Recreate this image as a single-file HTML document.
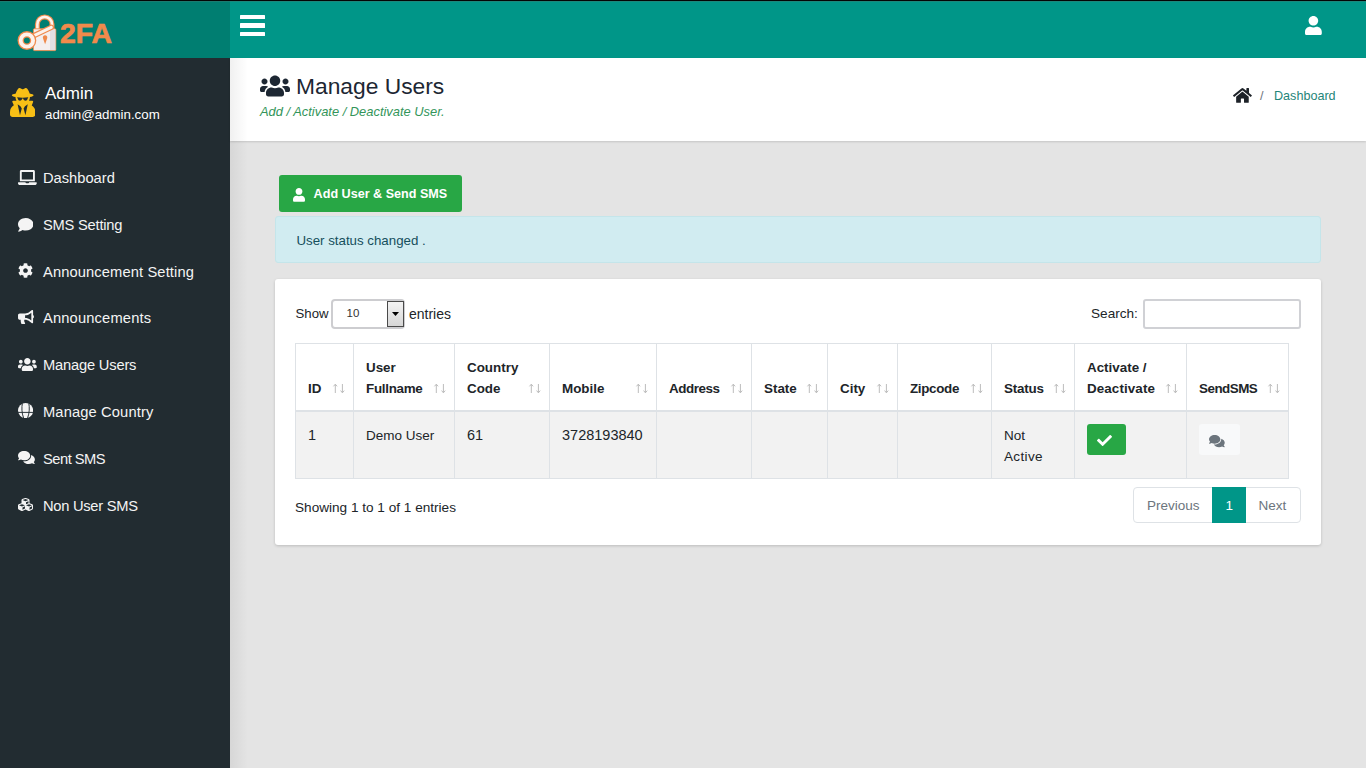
<!DOCTYPE html>
<html><head><meta charset="utf-8"><title>Manage Users</title>
<style>
*{box-sizing:border-box;margin:0;padding:0}
html,body{width:1366px;height:768px;overflow:hidden}
body{font-family:"Liberation Sans",sans-serif;background:#e4e4e4;position:relative;color:#212529}
.a{position:absolute;white-space:nowrap;line-height:1}
.topline{position:absolute;left:0;top:0;width:1366px;height:1px;background:#050505}
.logo{position:absolute;left:0;top:1px;width:230px;height:57px;background:#007e71}
.nav{position:absolute;left:230px;top:1px;width:1136px;height:57px;background:#009688}
.sidebar{position:absolute;left:0;top:58px;width:230px;height:710px;background:#222c31}
.header{position:absolute;left:230px;top:58px;width:1136px;height:83px;background:#fff;box-shadow:0 1px 2px rgba(0,0,0,.14)}
.shadowL{position:absolute;left:230px;top:58px;width:18px;height:710px;background:linear-gradient(to right,rgba(0,0,0,.06),rgba(0,0,0,0))}
.bar{position:absolute;left:240px;width:25px;height:4.5px;background:#fff;border-radius:0.5px}
.side-item{position:absolute;left:43px;font-size:14.7px;color:#f4f4f4}
.side-ico{position:absolute;left:18px}
.btn-add{position:absolute;left:279px;top:175px;width:183px;height:37px;background:#28a745;border-radius:3px}
.alert{position:absolute;left:275px;top:216px;width:1046px;height:47px;background:#d1ecf1;border:1px solid #c4e5ea;border-radius:3px}
.card{position:absolute;left:275px;top:279px;width:1046px;height:266px;background:#fff;border-radius:3px;box-shadow:0 1px 3px rgba(0,0,0,.18)}
.ic{position:absolute;display:block}
.th{font-size:13.4px;font-weight:bold;color:#212529}
.td{font-size:13.5px;color:#212529}
.sort{position:absolute;display:block}
</style></head><body>
<div class="topline"></div>
<div class="logo"></div>
<div class="nav"></div>
<div class="sidebar"></div>
<div class="header"></div>
<div class="shadowL"></div>
<div style="position:absolute;left:0;top:1px;width:1366px;height:1px;background:rgba(60,120,110,.45)"></div>

<!-- hamburger -->
<div class="bar" style="top:14.7px"></div>
<div class="bar" style="top:23.1px"></div>
<div class="bar" style="top:31.7px"></div>

<!-- logo text -->
<div class="a" style="left:60px;top:19px;font-size:28.3px;font-weight:bold;color:#f28a4b;-webkit-text-stroke:0.7px #f28a4b">2FA</div>

<!-- sidebar user -->
<div class="a" style="left:45px;top:84.6px;font-size:17px;color:#fff">Admin</div>
<div class="a" style="left:45px;top:107.7px;font-size:13.3px;color:#fff">admin@admin.com</div>

<!-- sidebar menu -->
<div class="a side-item" style="top:171px">Dashboard</div>
<div class="a side-item" style="top:217.8px;letter-spacing:-0.22px">SMS Setting</div>
<div class="a side-item" style="top:264.6px;letter-spacing:0.12px">Announcement Setting</div>
<div class="a side-item" style="top:311.4px;letter-spacing:0.16px">Announcements</div>
<div class="a side-item" style="top:358.2px;letter-spacing:-0.19px">Manage Users</div>
<div class="a side-item" style="top:405px;letter-spacing:0.13px">Manage Country</div>
<div class="a side-item" style="top:451.8px;letter-spacing:-0.5px">Sent SMS</div>
<div class="a side-item" style="top:498.6px;letter-spacing:-0.27px">Non User SMS</div>

<!-- header -->
<div class="a" style="left:296px;top:75.2px;font-size:22.8px;color:#1d2733">Manage Users</div>
<div class="a" style="left:260px;top:105.8px;font-size:12.9px;font-style:italic;color:#33955a">Add / Activate / Deactivate User.</div>
<div class="a" style="left:1260px;top:90.3px;font-size:12.6px;color:#6c757d">/</div>
<div class="a" style="left:1274px;top:90.3px;font-size:12.6px;color:#1f8579">Dashboard</div>

<!-- add button -->
<div class="btn-add"></div>
<div class="a" style="left:313.6px;top:187.8px;font-size:12.6px;font-weight:bold;color:#fff">Add User &amp; Send SMS</div>

<!-- alert -->
<div class="alert"></div>
<div class="a" style="left:296.4px;top:234.2px;font-size:13.3px;color:#154f5c">User status changed .</div>

<!-- card -->
<div class="card"></div>
<div class="a" style="left:295.5px;top:306.5px;font-size:13.2px">Show</div>
<div class="a" style="left:409px;top:306.5px;font-size:14px">entries</div>
<div class="a" style="left:1091px;top:306.5px;font-size:13.6px">Search:</div>
<div class="a" style="left:295px;top:501.3px;font-size:13.6px">Showing 1 to 1 of 1 entries</div>

<!-- logo icon -->
<svg class="ic" style="left:14px;top:10px" width="50" height="46" viewBox="0 0 50 46">
 <path d="M23.4 20V14.2A7.3 7.3 0 0 1 38 14.2V20" fill="none" stroke="#ef8a4c" stroke-width="5"/>
 <path d="M23.4 20V14.2A7.3 7.3 0 0 1 38 14.2V20" fill="none" stroke="#fdf3ec" stroke-width="2.6"/>
 <rect x="19.4" y="18.8" width="22.4" height="21.8" rx="1" fill="#f4efee" stroke="#ef8a4c" stroke-width="0.9"/>
 <rect x="36" y="19.3" width="5.4" height="20.8" fill="#e3dfe3"/>
 <path d="M31.1 25.3c1.7 0 2.6 1.4 2.1 2.9l-1.2 3.6 -0.9 2.4 -0.9-2.4 -1.2-3.6c-0.5-1.5 0.4-2.9 2.1-2.9z" fill="#ef8a4c"/>
 <path d="M18.5 26.3L37.3 17.4" stroke="#ef8a4c" stroke-width="5.4" stroke-linecap="round"/>
 <path d="M18.5 26.3L37.3 17.4" stroke="#fdf3ec" stroke-width="3" stroke-linecap="round"/>
 <circle cx="12.9" cy="30.5" r="6.2" fill="none" stroke="#ef8a4c" stroke-width="6.4"/>
 <circle cx="12.9" cy="30.5" r="6.2" fill="none" stroke="#fdf3ec" stroke-width="3.8"/>
</svg>

<!-- spy icon -->
<svg class="ic" style="left:9.5px;top:88px" width="25.4" height="29" viewBox="0 0 448 512"><path fill="#f7bf16" d="M383.9 308.3l23.9-62.6c4-10.5-3.7-21.7-15-21.7h-58.5c11-18.9 17.8-40.6 17.8-64v-.3c39.2-7.8 64-19.1 64-31.7 0-13.3-27.3-25.1-70.1-33-9.2-32.8-27-65.8-40.6-82.8-9.5-11.9-25.9-15.6-39.5-8.8l-27.6 13.8c-9 4.5-19.6 4.5-28.6 0L182.1 3.4c-13.6-6.8-30-3.1-39.5 8.8-13.5 17-31.4 50-40.6 82.8-42.7 7.9-70 19.7-70 33 0 12.6 24.8 23.9 64 31.7v.3c0 23.4 6.8 45.1 17.8 64H56.3c-11.5 0-19.2 11.700-14.7 22.300l25.8 60.2C27.3 329.8 0 372.7 0 422.4v44.8C0 491.9 20.1 512 44.8 512h358.4c24.7 0 44.8-20.1 44.8-44.8v-44.8c0-48.4-25.8-90.4-64.1-114.100zM176 480l-41.6-192 49.6 32 24 40-32 120zm96 0l-32-120 24-40 49.6-32L272 480zm41.7-298.5c-3.9 11.9-7 24.6-16.5 33.4-10.1 9.3-48 22.4-64-25-2.8-8.4-15.4-8.4-18.3 0-17 50.2-56 32.4-64 25-9.5-8.8-12.7-21.5-16.5-33.4-.8-2.5-6.300-5.700-6.300-5.800v-10.8c28.3 3.6 61 5.8 96 5.8s67.7-2.1 96-5.8v10.8c-.1.1-5.6 3.2-6.4 5.8z"/></svg>

<!-- sidebar icons -->
<svg class="ic" style="left:18px;top:170px" width="18.75" height="15" viewBox="0 0 640 512"><path fill="#f4f4f4" d="M624 416H381.54c-.74 19.81-14.71 32-32.74 32H288c-18.690 0-33.020-17.470-32.770-32H16c-8.8 0-16 7.2-16 16v16c0 35.2 28.8 64 64 64h512c35.2 0 64-28.8 64-64v-16c0-8.8-7.2-16-16-16zM576 48c0-26.4-21.6-48-48-48H112C85.6 0 64 21.6 64 48v336h512V48zm-64 272H128V64h384v256z"/></svg>
<svg class="ic" style="left:17.5px;top:217px" width="15.5" height="15.5" viewBox="0 0 512 512"><path fill="#f4f4f4" d="M256 32C114.6 32 0 125.1 0 240c0 49.6 21.4 95 57 130.7C44.5 421.1 2.7 466 2.2 466.5c-2.2 2.3-2.8 5.7-1.5 8.7S4.8 480 8 480c66.3 0 116-31.8 140.6-51.4 32.7 12.3 69 19.4 107.4 19.4 141.4 0 256-93.1 256-208S397.4 32 256 32z"/></svg>
<svg class="ic" style="left:18px;top:263px" width="15" height="15" viewBox="0 0 512 512"><path fill="#f4f4f4" d="M487.4 315.7l-42.6-24.6c4.3-23.2 4.3-47 0-70.2l42.6-24.6c4.9-2.8 7.1-8.6 5.5-14-11.1-35.6-30-67.8-54.7-94.6-3.8-4.1-10-5.1-14.8-2.3L380.8 110c-17.9-15.4-38.5-27.3-60.8-35.1V25.8c0-5.6-3.9-10.5-9.4-11.7-36.7-8.2-74.3-7.8-109.2 0-5.5 1.2-9.4 6.1-9.4 11.7V75c-22.2 7.9-42.8 19.8-60.8 35.1L88.7 85.5c-4.9-2.8-11-1.9-14.8 2.3-24.7 26.7-43.6 58.9-54.7 94.6-1.7 5.4.6 11.2 5.5 14L67.3 221c-4.3 23.2-4.3 47 0 70.2l-42.6 24.6c-4.9 2.8-7.1 8.6-5.5 14 11.1 35.6 30 67.8 54.7 94.6 3.8 4.1 10 5.1 14.8 2.3l42.6-24.6c17.9 15.4 38.5 27.3 60.8 35.1v49.2c0 5.6 3.9 10.5 9.4 11.7 36.7 8.2 74.3 7.8 109.2 0 5.5-1.2 9.4-6.1 9.4-11.7v-49.2c22.2-7.9 42.8-19.8 60.8-35.1l42.6 24.6c4.9 2.8 11 1.9 14.8-2.3 24.7-26.7 43.6-58.9 54.7-94.6 1.5-5.5-.7-11.3-5.6-14.1zM256 336c-44.1 0-80-35.9-80-80s35.9-80 80-80 80 35.9 80 80-35.9 80-80 80z"/></svg>
<svg class="ic" style="left:18px;top:309.5px" width="16" height="14.2" viewBox="0 0 576 512"><path fill="#f4f4f4" d="M576 240c0-23.63-12.95-44.04-32-55.12V32.01C544 23.26 537.02 0 512 0c-7.12 0-14.19 2.38-19.98 7.02l-85.03 68.03C364.28 109.19 310.66 128 256 128H64c-35.35 0-64 28.65-64 64v96c0 35.35 28.65 64 64 64h33.7c-1.39 10.48-2.18 21.14-2.18 32 0 39.77 9.26 77.35 25.56 110.94 5.19 10.69 16.52 17.06 28.4 17.06h74.28c26.05 0 41.69-29.84 25.9-50.56-16.4-21.52-26.15-48.36-26.15-77.44 0-11.11 1.62-21.79 4.41-32H256c54.66 0 108.28 18.81 150.98 52.95l85.03 68.03a32.023 32.023 0 0 0 19.98 7.02c24.92 0 32-22.78 32-32V295.13C563.05 284.04 576 263.63 576 240zm-96 141.42l-33.05-26.44C392.95 311.78 325.12 288 256 288v-96c69.12 0 136.95-23.78 190.95-66.98L480 98.58v282.84z"/></svg>
<svg class="ic" style="left:18px;top:357px" width="18.75" height="15" viewBox="0 0 640 512"><path fill="#f4f4f4" d="M96 224c35.3 0 64-28.7 64-64s-28.7-64-64-64-64 28.7-64 64 28.7 64 64 64zm448 0c35.3 0 64-28.7 64-64s-28.7-64-64-64-64 28.7-64 64 28.7 64 64 64zm32 32h-64c-17.6 0-33.5 7.1-45.1 18.6 40.3 22.1 68.9 62 75.1 109.4h66c17.7 0 32-14.3 32-32v-32c0-35.3-28.7-64-64-64zm-256 0c61.9 0 112-50.1 112-112S381.9 32 320 32 208 82.1 208 144s50.1 112 112 112zm76.8 32h-8.3c-20.8 10-43.9 16-68.5 16s-47.6-6-68.5-16h-8.3C179.6 288 128 339.6 128 403.2V432c0 26.5 21.5 48 48 48h288c26.5 0 48-21.5 48-48v-28.8c0-63.6-51.6-115.2-115.2-115.2zm-223.7-13.4C161.5 263.1 145.6 256 128 256H64c-35.3 0-64 28.7-64 64v32c0 17.7 14.3 32 32 32h65.9c6.3-47.4 34.9-87.3 75.2-109.4z"/></svg>
<svg class="ic" style="left:17.8px;top:403px" width="15.2" height="15.2" viewBox="0 0 15.2 15.2"><circle cx="7.6" cy="7.6" r="7.6" fill="#f4f4f4"/><path d="M0 9.4H15.2M4.4 0.3C3.6 4 3.6 10 5.6 15M10.8 0.3C11.6 4 11.6 10 9.6 15" fill="none" stroke="#222c31" stroke-width="0.95"/></svg>
<svg class="ic" style="left:18px;top:450px" width="16.9" height="15" viewBox="0 0 576 512"><path fill="#f4f4f4" d="M416 192c0-88.4-93.1-160-208-160S0 103.6 0 192c0 34.3 14.1 65.9 38 92-13.4 30.2-35.5 54.2-35.8 54.5-2.2 2.3-2.8 5.7-1.5 8.7S4.8 352 8 352c36.6 0 66.9-12.3 88.7-25 32.2 15.7 70.3 25 111.3 25 114.9 0 208-71.6 208-160zm122 220c23.9-26 38-57.7 38-92 0-66.9-53.5-124.2-129.3-148.1.9 6.6 1.3 13.3 1.3 20.1 0 105.9-107.7 192-240 192-10.8 0-21.3-.8-31.7-1.9C207.8 439.6 281.8 480 368 480c41 0 79.1-9.2 111.3-25 21.8 12.7 52.1 25 88.7 25 3.2 0 6.1-1.9 7.3-4.8 1.3-2.9.7-6.3-1.5-8.7-.3-.3-22.4-24.2-35.8-54.5z"/></svg>
<svg class="ic" style="left:18px;top:497px" width="15" height="15" viewBox="0 0 512 512"><path fill="#f4f4f4" d="M488.6 250.2L392 214V105.5c0-15-9.3-28.4-23.4-33.7l-100-37.5c-8.1-3.1-17.1-3.1-25.3 0l-100 37.5c-14.1 5.3-23.4 18.7-23.4 33.7V214l-96.6 36.2C9.3 255.5 0 268.9 0 283.9V394c0 13.6 7.7 26.1 19.9 32.2l100 50c10.1 5.1 22.1 5.1 32.2 0l103.9-52 103.9 52c10.1 5.1 22.1 5.1 32.2 0l100-50c12.2-6.1 19.9-18.6 19.9-32.2V283.9c0-15-9.3-28.4-23.4-33.7zM358 214.8l-85 31.9v-68.2l85-37v73.3zM154 104.1l102-38.2 102 38.2v.6l-102 41.4-102-41.4v-.6zm84 291.1l-85 42.5v-79.1l85-38.8v75.4zm0-112l-102 41.4-102-41.4v-.6l102-38.2 102 38.2v.6zm240 112l-85 42.5v-79.1l85-38.8v75.4zm0-112l-102 41.4-102-41.4v-.6l102-38.2 102 38.2v.6z"/></svg>

<!-- header users icon -->
<svg class="ic" style="left:260px;top:73.5px" width="30" height="24" viewBox="0 0 640 512"><path fill="#1d2733" d="M96 224c35.3 0 64-28.7 64-64s-28.7-64-64-64-64 28.7-64 64 28.7 64 64 64zm448 0c35.3 0 64-28.7 64-64s-28.7-64-64-64-64 28.7-64 64 28.7 64 64 64zm32 32h-64c-17.6 0-33.5 7.1-45.1 18.6 40.3 22.1 68.9 62 75.1 109.4h66c17.7 0 32-14.3 32-32v-32c0-35.3-28.7-64-64-64zm-256 0c61.9 0 112-50.1 112-112S381.9 32 320 32 208 82.1 208 144s50.1 112 112 112zm76.8 32h-8.3c-20.8 10-43.9 16-68.5 16s-47.6-6-68.5-16h-8.3C179.6 288 128 339.6 128 403.2V432c0 26.5 21.5 48 48 48h288c26.5 0 48-21.5 48-48v-28.8c0-63.6-51.6-115.2-115.2-115.2zm-223.7-13.4C161.5 263.1 145.6 256 128 256H64c-35.3 0-64 28.7-64 64v32c0 17.7 14.3 32 32 32h65.9c6.3-47.4 34.9-87.3 75.2-109.4z"/></svg>
<!-- home -->
<svg class="ic" style="left:1233px;top:87.2px" width="18.9" height="16.8" viewBox="0 0 576 512"><path fill="#1d2228" d="M280.37 148.26L96 300.11V464a16 16 0 0 0 16 16l112.06-.29a16 16 0 0 0 15.92-16V368a16 16 0 0 1 16-16h64a16 16 0 0 1 16 16v95.64a16 16 0 0 0 16 16.05L464 480a16 16 0 0 0 16-16V300L295.670 148.26a12.19 12.19 0 0 0-15.3 0zM571.6 251.47L488 182.56V44.05a12 12 0 0 0-12-12h-56a12 12 0 0 0-12 12v72.61L318.47 43a48 48 0 0 0-61 0L4.34 251.47a12 12 0 0 0-1.6 16.9l25.5 31A12 12 0 0 0 45.15 301l235.22-193.74a12.19 12.19 0 0 1 15.3 0L530.9 301a12 12 0 0 0 16.9-1.6l25.5-31a12 12 0 0 0-1.7-16.93z"/></svg>
<!-- top user -->
<svg class="ic" style="left:1305px;top:16px" width="16.8" height="19.2" viewBox="0 0 448 512"><path fill="#fff" d="M224 256c70.7 0 128-57.3 128-128S294.7 0 224 0 96 57.3 96 128s57.3 128 128 128zm89.6 32h-16.7c-22.2 10.2-46.9 16-72.9 16s-50.6-5.8-72.9-16h-16.7C60.2 288 0 348.2 0 422.4V464c0 26.5 21.5 48 48 48h352c26.5 0 48-21.5 48-48v-41.6c0-74.2-60.2-134.4-134.4-134.4z"/></svg>
<!-- add btn user -->
<svg class="ic" style="left:293px;top:188.3px" width="12" height="13.7" viewBox="0 0 448 512"><path fill="#fff" d="M224 256c70.7 0 128-57.3 128-128S294.7 0 224 0 96 57.3 96 128s57.3 128 128 128zm89.6 32h-16.7c-22.2 10.2-46.9 16-72.9 16s-50.6-5.8-72.9-16h-16.7C60.2 288 0 348.2 0 422.4V464c0 26.5 21.5 48 48 48h352c26.5 0 48-21.5 48-48v-41.6c0-74.2-60.2-134.4-134.4-134.4z"/></svg>

<!-- table grid -->
<div style="position:absolute;left:296px;top:412px;width:992px;height:66px;background:#f2f2f2"></div>
<div style="position:absolute;left:295px;top:343px;width:994px;height:136px;border:1px solid #dee2e6"></div>
<div style="position:absolute;left:295px;top:410px;width:994px;height:2px;background:#dee2e6"></div>
<div style="position:absolute;left:353px;top:343px;width:1px;height:136px;background:#dee2e6"></div>
<div style="position:absolute;left:454px;top:343px;width:1px;height:136px;background:#dee2e6"></div>
<div style="position:absolute;left:549px;top:343px;width:1px;height:136px;background:#dee2e6"></div>
<div style="position:absolute;left:656px;top:343px;width:1px;height:136px;background:#dee2e6"></div>
<div style="position:absolute;left:751px;top:343px;width:1px;height:136px;background:#dee2e6"></div>
<div style="position:absolute;left:827px;top:343px;width:1px;height:136px;background:#dee2e6"></div>
<div style="position:absolute;left:897px;top:343px;width:1px;height:136px;background:#dee2e6"></div>
<div style="position:absolute;left:991px;top:343px;width:1px;height:136px;background:#dee2e6"></div>
<div style="position:absolute;left:1074px;top:343px;width:1px;height:136px;background:#dee2e6"></div>
<div style="position:absolute;left:1186px;top:343px;width:1px;height:136px;background:#dee2e6"></div>
<div class="a th" style="left:308px;top:381.7px">ID</div>
<svg class="sort" style="left:332px;top:383px" width="13" height="11" viewBox="0 0 13 11"><path d="M3.3 1.3V10M1.5 3.3L3.3 1.2L5.1 3.3M10.4 1V9.7M8.6 7.6L10.4 9.8L12.2 7.6" fill="none" stroke="#bcbcbc" stroke-width="1"/></svg>
<div class="a th" style="left:366px;top:360.7px">User</div>
<div class="a th" style="left:366px;top:381.7px;letter-spacing:-0.28px">Fullname</div>
<svg class="sort" style="left:433px;top:383px" width="13" height="11" viewBox="0 0 13 11"><path d="M3.3 1.3V10M1.5 3.3L3.3 1.2L5.1 3.3M10.4 1V9.7M8.6 7.6L10.4 9.8L12.2 7.6" fill="none" stroke="#bcbcbc" stroke-width="1"/></svg>
<div class="a th" style="left:467px;top:360.7px">Country</div>
<div class="a th" style="left:467px;top:381.7px">Code</div>
<svg class="sort" style="left:528px;top:383px" width="13" height="11" viewBox="0 0 13 11"><path d="M3.3 1.3V10M1.5 3.3L3.3 1.2L5.1 3.3M10.4 1V9.7M8.6 7.6L10.4 9.8L12.2 7.6" fill="none" stroke="#bcbcbc" stroke-width="1"/></svg>
<div class="a th" style="left:562px;top:381.7px">Mobile</div>
<svg class="sort" style="left:635px;top:383px" width="13" height="11" viewBox="0 0 13 11"><path d="M3.3 1.3V10M1.5 3.3L3.3 1.2L5.1 3.3M10.4 1V9.7M8.6 7.6L10.4 9.8L12.2 7.6" fill="none" stroke="#bcbcbc" stroke-width="1"/></svg>
<div class="a th" style="left:669px;top:381.7px;letter-spacing:-0.45px">Address</div>
<svg class="sort" style="left:730px;top:383px" width="13" height="11" viewBox="0 0 13 11"><path d="M3.3 1.3V10M1.5 3.3L3.3 1.2L5.1 3.3M10.4 1V9.7M8.6 7.6L10.4 9.8L12.2 7.6" fill="none" stroke="#bcbcbc" stroke-width="1"/></svg>
<div class="a th" style="left:764px;top:381.7px">State</div>
<svg class="sort" style="left:806px;top:383px" width="13" height="11" viewBox="0 0 13 11"><path d="M3.3 1.3V10M1.5 3.3L3.3 1.2L5.1 3.3M10.4 1V9.7M8.6 7.6L10.4 9.8L12.2 7.6" fill="none" stroke="#bcbcbc" stroke-width="1"/></svg>
<div class="a th" style="left:840px;top:381.7px">City</div>
<svg class="sort" style="left:876px;top:383px" width="13" height="11" viewBox="0 0 13 11"><path d="M3.3 1.3V10M1.5 3.3L3.3 1.2L5.1 3.3M10.4 1V9.7M8.6 7.6L10.4 9.8L12.2 7.6" fill="none" stroke="#bcbcbc" stroke-width="1"/></svg>
<div class="a th" style="left:910px;top:381.7px;letter-spacing:-0.33px">Zipcode</div>
<svg class="sort" style="left:970px;top:383px" width="13" height="11" viewBox="0 0 13 11"><path d="M3.3 1.3V10M1.5 3.3L3.3 1.2L5.1 3.3M10.4 1V9.7M8.6 7.6L10.4 9.8L12.2 7.6" fill="none" stroke="#bcbcbc" stroke-width="1"/></svg>
<div class="a th" style="left:1004px;top:381.7px;letter-spacing:-0.2px">Status</div>
<svg class="sort" style="left:1053px;top:383px" width="13" height="11" viewBox="0 0 13 11"><path d="M3.3 1.3V10M1.5 3.3L3.3 1.2L5.1 3.3M10.4 1V9.7M8.6 7.6L10.4 9.8L12.2 7.6" fill="none" stroke="#bcbcbc" stroke-width="1"/></svg>
<div class="a th" style="left:1087px;top:360.7px">Activate /</div>
<div class="a th" style="left:1087px;top:381.7px;letter-spacing:0.1px">Deactivate</div>
<svg class="sort" style="left:1165px;top:383px" width="13" height="11" viewBox="0 0 13 11"><path d="M3.3 1.3V10M1.5 3.3L3.3 1.2L5.1 3.3M10.4 1V9.7M8.6 7.6L10.4 9.8L12.2 7.6" fill="none" stroke="#bcbcbc" stroke-width="1"/></svg>
<div class="a th" style="left:1199px;top:381.7px;letter-spacing:-0.5px">SendSMS</div>
<svg class="sort" style="left:1267px;top:383px" width="13" height="11" viewBox="0 0 13 11"><path d="M3.3 1.3V10M1.5 3.3L3.3 1.2L5.1 3.3M10.4 1V9.7M8.6 7.6L10.4 9.8L12.2 7.6" fill="none" stroke="#bcbcbc" stroke-width="1"/></svg>
<!-- select -->
<div style="position:absolute;left:331px;top:299px;width:74px;height:30px;border:2px solid #cdcdd0;border-radius:4px;background:#fff"></div>
<div style="position:absolute;left:387px;top:301px;width:17px;height:26px;border:1px solid #4a4a4a;background:linear-gradient(#f3f3f3,#d6d6d6)"></div>
<svg class="ic" style="left:391px;top:311px" width="9" height="6" viewBox="0 0 9 6"><path d="M1 1H8L4.5 5z" fill="#000"/></svg>
<div class="a" style="left:346.5px;top:308.3px;font-size:11.5px;color:#333">10</div>
<!-- search input -->
<div style="position:absolute;left:1143px;top:299px;width:158px;height:30px;border:2px solid #d0d1d5;border-radius:3px;background:#fff"></div>

<!-- body row -->
<div class="a td" style="left:308px;top:427.7px;font-size:14.5px">1</div>
<div class="a td" style="left:366px;top:428.6px">Demo User</div>
<div class="a td" style="left:467px;top:427.7px;font-size:14.5px">61</div>
<div class="a td" style="left:562px;top:427.7px;font-size:14.5px">3728193840</div>
<div class="a td" style="left:1004px;top:428.6px">Not</div>
<div class="a td" style="left:1004px;top:449.6px;letter-spacing:0.35px">Active</div>
<div style="position:absolute;left:1087px;top:424px;width:39px;height:31px;background:#28a745;border-radius:3px"></div>
<svg class="ic" style="left:1097px;top:433px" width="15" height="15" viewBox="0 0 512 512"><path fill="#fff" d="M173.898 439.404l-166.4-166.4c-9.997-9.997-9.997-26.206 0-36.204l36.203-36.204c9.997-9.998 26.207-9.998 36.204 0L192 312.69 432.095 72.596c9.997-9.997 26.207-9.997 36.204 0l36.203 36.204c9.997 9.997 9.997 26.206 0 36.204l-294.4 294.401c-9.998 9.997-26.207 9.997-36.204-.001z"/></svg>
<div style="position:absolute;left:1199px;top:424px;width:41px;height:31px;background:#f8f9fa;border-radius:3px"></div>
<svg class="ic" style="left:1209px;top:434px" width="15.75" height="14" viewBox="0 0 576 512"><path fill="#6c757d" d="M416 192c0-88.4-93.1-160-208-160S0 103.6 0 192c0 34.3 14.1 65.9 38 92-13.4 30.2-35.5 54.2-35.8 54.5-2.2 2.3-2.8 5.7-1.5 8.7S4.8 352 8 352c36.6 0 66.9-12.3 88.7-25 32.2 15.7 70.3 25 111.3 25 114.9 0 208-71.6 208-160zm122 220c23.900-26 38-57.7 38-92 0-66.9-53.5-124.2-129.3-148.1.9 6.6 1.3 13.3 1.3 20.1 0 105.9-107.7 192-240 192-10.8 0-21.3-.8-31.7-1.9C207.8 439.6 281.8 480 368 480c41 0 79.1-9.2 111.3-25 21.8 12.7 52.1 25 88.7 25 3.2 0 6.1-1.9 7.3-4.8 1.3-2.9.7-6.3-1.5-8.7-.3-.3-22.4-24.2-35.8-54.5z"/></svg>

<!-- pagination -->
<div style="position:absolute;left:1133px;top:487px;width:168px;height:36px;border:1px solid #dee2e6;border-radius:4px;background:#fff"></div>
<div style="position:absolute;left:1212px;top:487px;width:34px;height:36px;background:#009688"></div>
<div class="a" style="left:1147px;top:498.6px;font-size:13.5px;color:#6c757d">Previous</div>
<div class="a" style="left:1225.5px;top:498.6px;font-size:13.5px;color:#fff">1</div>
<div class="a" style="left:1258.5px;top:498.6px;font-size:13.5px;color:#6c757d">Next</div>

</body></html>
